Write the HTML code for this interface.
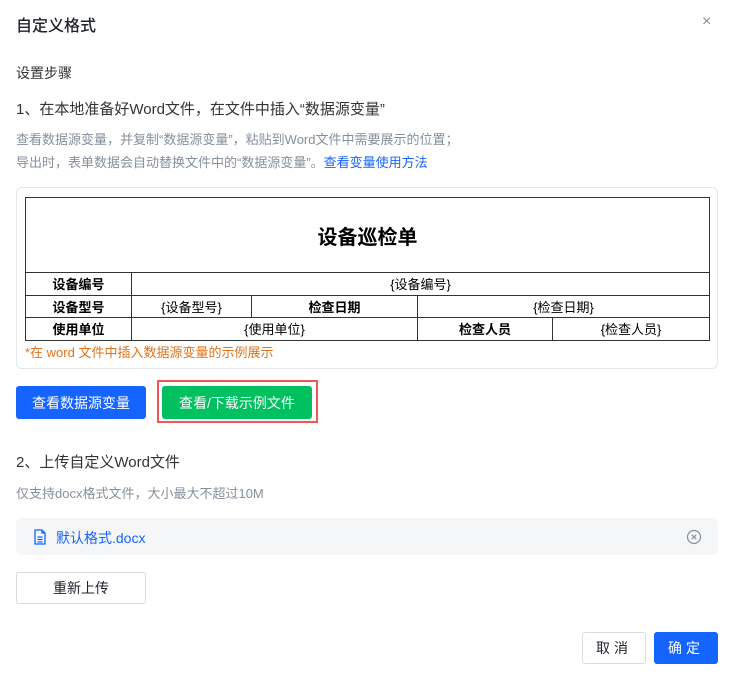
<!DOCTYPE html>
<html><head><meta charset="utf-8"><style>
*{box-sizing:border-box;margin:0;padding:0}
body{width:734px;height:675px;background:#fff;font-family:"Liberation Sans","Noto Sans CJK SC",sans-serif;color:#1d2129;position:relative;overflow:hidden}
.a{position:absolute;white-space:nowrap}
.btn{position:absolute;border-radius:3px;font-size:14px;display:flex;align-items:center;justify-content:center}
table{border-collapse:collapse;position:absolute;left:25px;top:197px;width:684px;font-size:13px;table-layout:fixed}
td{border:1px solid #333;text-align:center;height:22.6px;padding:0;color:#000}
.b{font-weight:bold}
</style></head><body>
<div class="a" style="left:16px;top:12px;font-size:16px;font-weight:500">自定义格式</div>
<div class="a" style="left:702px;top:13px;font-size:16px;color:#86909c">×</div>
<div class="a" style="left:16px;top:63px;font-size:14px;color:#333">设置步骤</div>
<div class="a" style="left:16px;top:98px;font-size:15px;color:#333">1、在本地准备好Word文件，在文件中插入“数据源变量”</div>
<div class="a" style="left:16px;top:129px;font-size:13px;color:#86909c">查看数据源变量，并复制“数据源变量”，粘贴到Word文件中需要展示的位置；</div>
<div class="a" style="left:16px;top:152px;font-size:13px;color:#86909c">导出时，表单数据会自动替换文件中的“数据源变量”。<span style="color:#1664ff">查看变量使用方法</span></div>
<div class="a" style="left:16px;top:187px;width:702px;height:182px;border:1px solid #e5e6eb;border-radius:6px"></div>
<table>
<colgroup><col style="width:106px"><col style="width:120px"><col style="width:166px"><col style="width:135px"><col style="width:157px"></colgroup>
<tr><td colspan="5" style="height:75px;font-size:20px;font-weight:bold">设备巡检单</td></tr>
<tr><td class="b">设备编号</td><td colspan="4">{设备编号}</td></tr>
<tr><td class="b">设备型号</td><td>{设备型号}</td><td class="b">检查日期</td><td colspan="2">{检查日期}</td></tr>
<tr><td class="b">使用单位</td><td colspan="2">{使用单位}</td><td class="b">检查人员</td><td>{检查人员}</td></tr>
</table>
<div class="a" style="left:25px;top:342px;font-size:13px;color:#e37318">*在 word 文件中插入数据源变量的示例展示</div>
<div class="btn" style="left:16px;top:386px;width:130px;height:33px;background:#1664ff;color:#fff">查看数据源变量</div>
<div class="a" style="left:157px;top:380px;width:161px;height:43px;border:2px solid #f25757"></div>
<div class="btn" style="left:162px;top:386px;width:150px;height:33px;background:#00c060;color:#fff">查看/下载示例文件</div>
<div class="a" style="left:16px;top:451px;font-size:15px;color:#333">2、上传自定义Word文件</div>
<div class="a" style="left:16px;top:483px;font-size:13px;color:#86909c">仅支持docx格式文件，大小最大不超过10M</div>
<div class="a" style="left:16px;top:518px;width:702px;height:37px;background:#f5f6f8;border-radius:6px"></div>
<svg class="a" style="left:33px;top:529px" width="14" height="16" viewBox="0 0 14 16"><path d="M2 1h7l3 3v11H2z M9 1v3h3 M4.5 8h5 M4.5 10.5h5 M4.5 13h5" fill="none" stroke="#1664ff" stroke-width="1.3"/></svg>
<div class="a" style="left:56px;top:528px;font-size:14px;color:#1664ff">默认格式.docx</div>
<svg class="a" style="left:686px;top:529px" width="16" height="16" viewBox="0 0 16 16"><circle cx="8" cy="8" r="6.5" fill="none" stroke="#86909c" stroke-width="1.2"/><path d="M5.8 5.8l4.4 4.4M10.2 5.8l-4.4 4.4" stroke="#86909c" stroke-width="1.2"/></svg>
<div class="btn" style="left:16px;top:572px;width:130px;height:32px;border:1px solid #dcdcdc;color:#1d2129">重新上传</div>
<div class="btn" style="left:582px;top:632px;width:64px;height:32px;border:1px solid #dcdcdc;letter-spacing:4px">取消</div>
<div class="btn" style="left:654px;top:632px;width:64px;height:32px;background:#1664ff;color:#fff;letter-spacing:4px">确定</div>
</body></html>
